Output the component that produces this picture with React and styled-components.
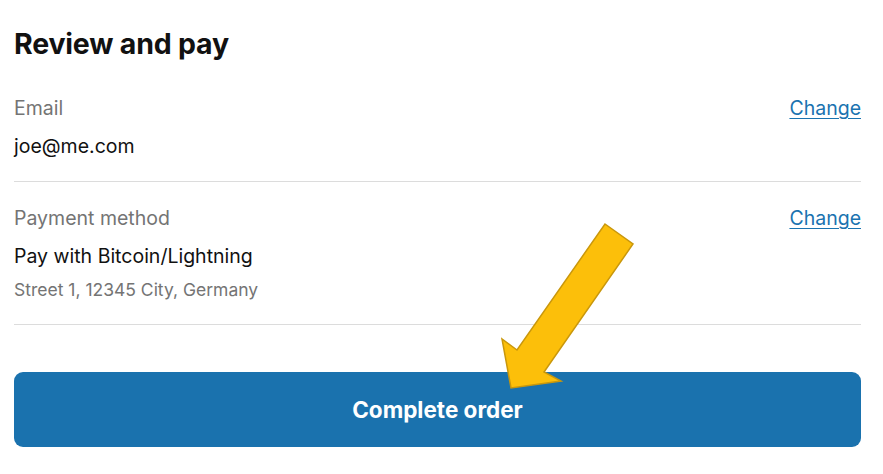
import styled, { createGlobalStyle } from "styled-components";

const GlobalStyle = createGlobalStyle`
  body {
    margin: 0;
    background: #ffffff;
    font-family: Inter, "Noto Sans", sans-serif;
    color: #111111;
  }
`;

const Page = styled.div`
  position: relative;
  width: 883px;
  height: 474px;
  box-sizing: border-box;
  padding: 27px 22px 0 14px;
  overflow: hidden;
`;

const Title = styled.h1`
  font-size: 28.5px;
  line-height: 34px;
  font-weight: 700;
  margin: 0 0 35px;
  letter-spacing: -0.2px;
`;

const Section = styled.div`
  display: flex;
  justify-content: space-between;
  align-items: flex-start;
  padding-bottom: 23px;
  margin-bottom: 24px;
  border-bottom: 1px solid #dcdcdc;
`;

const Info = styled.div`
  display: flex;
  flex-direction: column;
`;

const Label = styled.div`
  font-size: 19.5px;
  color: #747474;
  line-height: 24px;
  margin-bottom: 14px;
`;

const Value = styled.div`
  font-size: 19.5px;
  color: #111111;
  line-height: 24px;
`;

const Address = styled.div`
  font-size: 17.5px;
  color: #747474;
  line-height: 22px;
  margin-top: 11px;
`;

const ChangeLink = styled.a`
  font-size: 19.5px;
  color: #1a73b0;
  text-decoration: underline;
  text-underline-offset: 3px;
  line-height: 24px;
  cursor: pointer;
`;

const Button = styled.button`
  display: block;
  width: 100%;
  height: 75px;
  margin-top: 47px;
  border: none;
  border-radius: 9px;
  background: #1a72ae;
  color: #ffffff;
  font-family: Inter, "Noto Sans", sans-serif;
  font-size: 22.5px;
  font-weight: 700;
  cursor: pointer;
`;

const ArrowSvg = styled.svg`
  position: absolute;
  left: 0;
  top: 0;
  pointer-events: none;
`;

const Arrow = () => (
  <ArrowSvg width="883" height="474" viewBox="0 0 883 474">
    <polygon
      points="605,224 633,244 544,372 561,381 511,388 502,339 517,350"
      fill="#fcbf0a"
      stroke="#c9970c"
      strokeWidth="1.5"
      strokeLinejoin="miter"
    />
  </ArrowSvg>
);

export default function App() {
  return (
    <>
      <GlobalStyle />
      <Page>
        <Title>Review and pay</Title>
        <Section>
          <Info>
            <Label>Email</Label>
            <Value>joe@me.com</Value>
          </Info>
          <ChangeLink>Change</ChangeLink>
        </Section>
        <Section>
          <Info>
            <Label>Payment method</Label>
            <Value>Pay with Bitcoin/Lightning</Value>
            <Address>Street 1, 12345 City, Germany</Address>
          </Info>
          <ChangeLink>Change</ChangeLink>
        </Section>
        <Button>Complete order</Button>
        <Arrow />
      </Page>
    </>
  );
}
